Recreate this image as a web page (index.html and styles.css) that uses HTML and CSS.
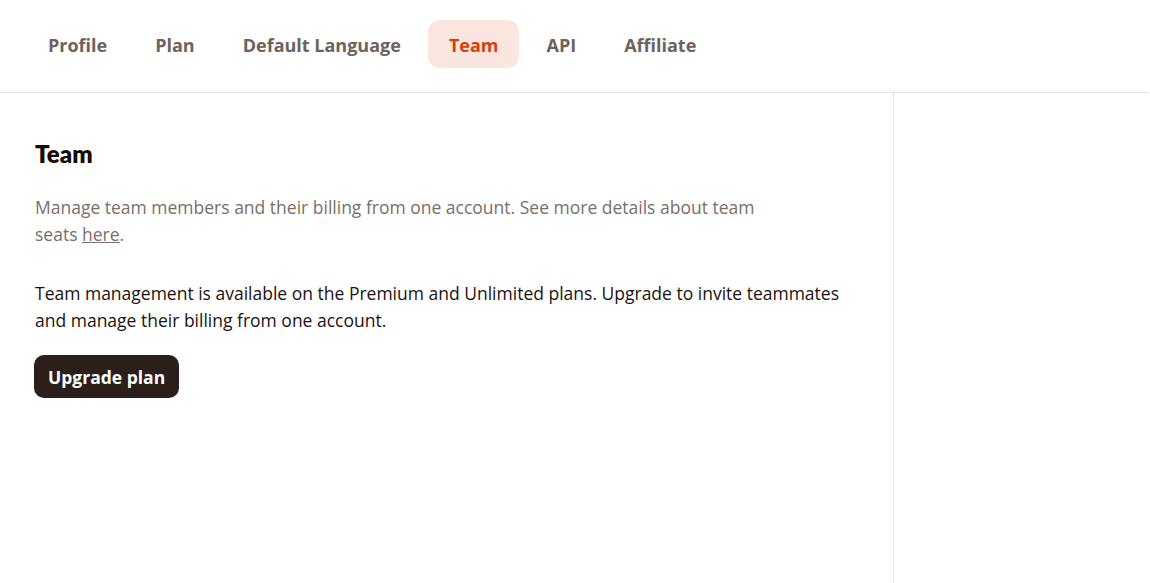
FILE: index.html
```html
<!DOCTYPE html>
<html lang="en">
<head>
<meta charset="utf-8">
<title>Team</title>
<link rel="stylesheet" href="styles.css">
</head>
<body>
<nav class="tabs">
  <a class="tab">Profile</a>
  <a class="tab">Plan</a>
  <a class="tab">Default Language</a>
  <a class="tab active">Team</a>
  <a class="tab">API</a>
  <a class="tab">Affiliate</a>
</nav>
<div class="layout">
  <main class="content">
    <h1 class="title">Team</h1>
    <p class="desc">Manage team members and their billing from one account. See more details about team seats <a class="link">here</a>.</p>
    <p class="info">Team management is available on the Premium and Unlimited plans. Upgrade to invite teammates and manage their billing from one account.</p>
    <button class="btn">Upgrade plan</button>
  </main>
  <aside class="side"></aside>
</div>
</body>
</html>
```
FILE: styles.css
```css
* { box-sizing: border-box; }
html, body { margin: 0; padding: 0; height: 100%; }
body {
  font-family: "Open Sans", "Noto Sans", sans-serif;
  background: #ffffff;
  color: #1c1210;
  display: flex;
  flex-direction: column;
  width: 1150px;
  height: 583px;
  overflow: hidden;
}
.tabs {
  display: flex;
  align-items: center;
  gap: 6px;
  padding: 20px 0 24px 27px;
  border-bottom: 1px solid #e5e2e0;
  width: 1149px;
  flex: none;
}
.tab {
  display: flex;
  align-items: center;
  height: 48px;
  padding: 1px 21px 0;
  border-radius: 12px;
  font-size: 18px;
  font-weight: 700;
  color: #6d625d;
}
.tab.active {
  background: #fbe6df;
  color: #d6400e;
}
.layout {
  display: flex;
  flex: 1;
}
.content {
  width: 894px;
  border-right: 1px solid #e5e2e0;
  padding: 47px 35px 0 35px;
}
.side { flex: 1; }
.title {
  margin: 0;
  font-family: "Lato", "Open Sans", sans-serif;
  font-size: 24px;
  font-weight: 800;
  line-height: 28px;
  color: #160b08;
}
.desc {
  margin: 26px 0 0;
  max-width: 760px;
  font-size: 17.5px;
  line-height: 27px;
  color: #7a6e69;
}
.link { color: #7a6e69; text-decoration: underline; }
.info {
  margin: 32px 0 0;
  font-size: 17.5px;
  line-height: 27px;
  color: #1c1210;
}
.btn {
  margin: 21px 0 0 -1px;
  height: 43px;
  padding: 0 14px;
  border: none;
  border-radius: 10px;
  background: #2a1f1b;
  color: #ffffff;
  font-family: "Open Sans", sans-serif;
  font-size: 17.5px;
  font-weight: 700;
  cursor: pointer;
}
```
